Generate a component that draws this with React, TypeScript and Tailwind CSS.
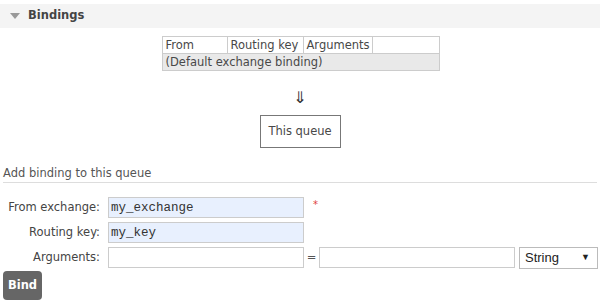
import React from 'react';

const font = { fontFamily: '"DejaVu Sans", Verdana, sans-serif' };
const mono = { fontFamily: '"Liberation Mono", "Courier New", monospace' };

function Row({ label, children }: { label: string; children: React.ReactNode }) {
  return (
    <div className="flex items-center h-[25px]">
      <div className="w-[108px] pr-[8px] text-right text-[11.5px] text-[#444] whitespace-nowrap">{label}</div>
      {children}
    </div>
  );
}

export default function App() {
  return (
    <div className="w-[600px] h-[304px] bg-white text-[#484848] overflow-hidden" style={font}>
      <div className="pt-[4px]">
        <div className="h-[24px] bg-[#f4f4f4] flex items-center pl-[10px]">
          <span className="w-0 h-0 border-l-[5px] border-r-[5px] border-t-[6px] border-l-transparent border-r-transparent border-t-[#999] mr-[8px]" />
          <span className="font-bold text-[11.5px] text-[#444]">Bindings</span>
        </div>
      </div>

      <div className="flex flex-col items-center mt-[8px]">
        <table className="border-collapse table-fixed w-[277px] text-[11.5px] text-[#484848] ml-[1px] whitespace-nowrap">
          <tbody>
            <tr className="h-[17px]">
              <td className="border border-[#ccc] px-[3px] w-[65px] py-0 leading-[15px]">From</td>
              <td className="border border-[#ccc] px-[3px] w-[76px] py-0 leading-[15px]">Routing key</td>
              <td className="border border-[#ccc] px-[3px] w-[69px] py-0 leading-[15px]">Arguments</td>
              <td className="border border-[#ccc] w-[67px]" />
            </tr>
            <tr className="h-[17px] bg-[#e9e9e9]">
              <td colSpan={4} className="border border-[#ccc] px-[3px] py-0 leading-[15px]">
                (Default exchange binding)
              </td>
            </tr>
          </tbody>
        </table>
        <div className="mt-[18px] text-[16px] leading-[18px] text-[#333]">⇓</div>
        <div className="mt-[8px] w-[81px] h-[33px] border border-[#777] flex items-center justify-center text-[11.5px] text-[#484848]">
          This queue
        </div>
      </div>

      <div className="mt-[18px] mx-[3px] pb-[2px] leading-[14px] border-b border-[#ddd] text-[11.5px] text-[#555]">
        Add binding to this queue
      </div>

      <div className="mt-[12px]">
        <Row label="From exchange:">
          <input
            readOnly
            value="my_exchange"
            className="w-[196px] h-[21px] border border-[#ccc] bg-[#e8f0fe] px-[2px] text-[12.5px] text-[#333] outline-none"
            style={mono}
          />
          <span className="ml-[9px] text-[10px] text-[#e04040] self-start mt-[2px]">*</span>
        </Row>
        <Row label="Routing key:">
          <input
            readOnly
            value="my_key"
            className="w-[196px] h-[21px] border border-[#ccc] bg-[#e8f0fe] px-[2px] text-[12.5px] text-[#333] outline-none"
            style={mono}
          />
        </Row>
        <Row label="Arguments:">
          <input
            readOnly
            value=""
            className="w-[196px] h-[21px] border border-[#ccc] bg-white outline-none"
          />
          <span className="w-[15px] text-center text-[11.5px] text-[#555]">=</span>
          <input
            readOnly
            value=""
            className="w-[196px] h-[21px] border border-[#ccc] bg-white outline-none"
          />
          <div
            className="ml-[4px] w-[79px] h-[22px] border border-[#bbb] bg-white flex items-center justify-between pl-[5px] pr-[7px] text-[13px] text-[#222]"
            style={{ fontFamily: '"Liberation Sans", Arial, sans-serif' }}
          >
            <span>String</span>
            <span className="text-[9px]">▼</span>
          </div>
        </Row>
      </div>

      <div className="pl-[3px] mt-[1px]">
        <button className="h-[29px] w-[39px] rounded-[4px] bg-[#666] text-white text-[11.5px] font-bold">
          Bind
        </button>
      </div>
    </div>
  );
}
